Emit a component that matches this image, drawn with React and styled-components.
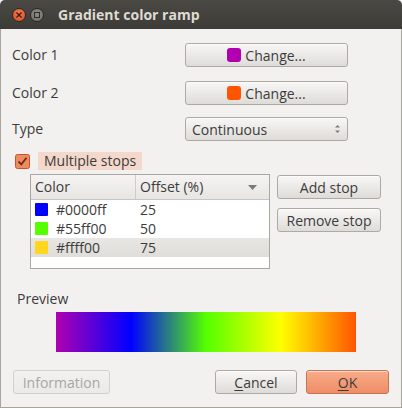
import React from 'react'
import styled, { createGlobalStyle } from 'styled-components'

const Global = createGlobalStyle`
  html, body { margin: 0; padding: 0; background: #f2f1f0; }
  body { font-family: "Open Sans", "Noto Sans", sans-serif; font-size: 14px; line-height: 18px; color: #3c3c3c; }
  * { box-sizing: border-box; }
`

const Window = styled.div`
  width: 402px;
  height: 408px;
  display: flex;
  flex-direction: column;
  background: #f2f1f0;
`

const TitleBar = styled.div`
  height: 29px;
  flex: none;
  display: flex;
  align-items: center;
  padding-left: 12px;
  background: linear-gradient(#4a4944, #3c3b37);
  border-radius: 5px 5px 0 0;
`

const WinButton = styled.div`
  width: 14px;
  height: 14px;
  border-radius: 50%;
  margin-right: 4px;
  display: flex;
  align-items: center;
  justify-content: center;
  background: ${p => (p.close ? 'radial-gradient(circle at 50% 35%, #f47a4f, #de4a1c)' : 'radial-gradient(circle at 50% 35%, #8c8b86, #6e6d68)')};
  border: 1px solid #2b2a27;
`

const Title = styled.div`
  margin-left: 10px;
  font-weight: 700;
  font-size: 14px;
  color: #dfdbd2;
`

const Body = styled.div`
  flex: 1;
  border: 1px solid #a8a59f;
  border-top: none;
  padding: 14px 12px 0 11px;
  display: flex;
  flex-direction: column;
`

const FormRow = styled.div`
  display: flex;
  align-items: center;
  height: 24px;
  margin-bottom: ${p => p.mb}px;
`

const Label = styled.div`
  width: 173px;
`

const Button = styled.button`
  font-family: inherit;
  font-size: 14px;
  color: ${p => (p.disabled ? '#a7a6a3' : '#3c3c3c')};
  height: 24px;
  width: ${p => p.w}px;
  padding: 0 6px;
  display: flex;
  align-items: center;
  justify-content: ${p => (p.left ? 'space-between' : 'center')};
  gap: 4px;
  border-radius: 3px;
  border: 1px solid ${p => (p.primary ? '#c67552' : p.disabled ? '#d3d0cb' : '#aeaaa3')};
  background: ${p =>
    p.primary
      ? 'linear-gradient(#f8ab8b, #ef8d65)'
      : p.disabled
      ? 'linear-gradient(#f2f1f0, #ebeae8)'
      : 'linear-gradient(#f8f7f6, #dedcd8)'};
  box-shadow: ${p => (p.disabled ? 'none' : 'inset 0 1px 0 rgba(255,255,255,0.6)')};
  cursor: default;
`

const Swatch = styled.span`
  display: inline-block;
  width: ${p => p.size || 14}px;
  height: ${p => p.size || 14}px;
  border-radius: ${p => (p.round ? 3 : 1)}px;
  background: ${p => p.color};
  flex: none;
`

const CheckRow = styled.div`
  display: flex;
  align-items: center;
  height: 18px;
  margin-left: 3px;
  gap: 8px;
`

const CheckLabel = styled.span`
  background: #f4d8cc;
  padding: 0 6px;
  height: 18px;
  line-height: 18px;
`

const StopsArea = styled.div`
  display: flex;
  margin-top: 4px;
  margin-left: 18px;
  gap: 7px;
`

const Table = styled.div`
  width: 240px;
  height: 95px;
  border: 1px solid #aaa7a1;
  background: #fff;
`

const Header = styled.div`
  display: grid;
  grid-template-columns: 104px 1fr;
  height: 25px;
  background: linear-gradient(#f5f4f3, #e7e5e2);
  border-bottom: 1px solid #c9c6c1;
`

const HeadCell = styled.div`
  display: flex;
  align-items: center;
  justify-content: space-between;
  padding: 0 12px 0 4px;
  border-left: ${p => (p.first ? 'none' : '1px solid #cfccc7')};
`

const Row = styled.div`
  display: grid;
  grid-template-columns: 104px 1fr;
  height: 19px;
  align-items: center;
  background: ${p => (p.selected ? 'linear-gradient(#e9e7e4, #dfddd9)' : 'transparent')};
`

const Cell = styled.div`
  display: flex;
  align-items: center;
  gap: 8px;
  padding-left: ${p => (p.first ? 4 : 5)}px;
`

const SideButtons = styled.div`
  display: flex;
  flex-direction: column;
  gap: 9px;
  padding-top: 1px;
`

const PreviewLabel = styled.div`
  margin: 21px 0 0 5px;
  height: 18px;
`

const GradientBar = styled.div`
  margin: 4px 0 0 44px;
  width: 300px;
  height: 40px;
  background: linear-gradient(to right, #b000b0 0%, #0000ff 25%, #55ff00 50%, #ffff00 75%, #ff5500 100%);
`

const Footer = styled.div`
  display: flex;
  align-items: center;
  margin-top: 18px;
  padding-left: 1px;
  gap: 9px;
`

const Spacer = styled.div`
  flex: 1;
`

const Mnemonic = styled.span`
  text-decoration: underline;
  text-underline-offset: 2px;
`

const Spin = () => (
  <svg width="7" height="12" viewBox="0 0 7 12">
    <path d="M1 4.5 L3.5 2 L6 4.5 Z" fill="#7d7b76" />
    <path d="M1 7.5 L3.5 10 L6 7.5 Z" fill="#7d7b76" />
  </svg>
)

const stops = [
  { color: '#0000ff', offset: 25 },
  { color: '#55ff00', offset: 50 },
  { color: '#ffd51e', hex: '#ffff00', offset: 75, selected: true },
]

export default function App() {
  return (
    <Window>
      <Global />
      <TitleBar>
        <WinButton close>
          <svg width="6" height="6" viewBox="0 0 6 6">
            <path d="M0.5 0.5 L5.5 5.5 M5.5 0.5 L0.5 5.5" stroke="#3a1a0e" strokeWidth="1.3" />
          </svg>
        </WinButton>
        <WinButton>
          <svg width="6" height="6" viewBox="0 0 6 6">
            <rect x="0.5" y="0.5" width="5" height="5" fill="none" stroke="#2e2d2a" strokeWidth="1" />
          </svg>
        </WinButton>
        <Title>Gradient color ramp</Title>
      </TitleBar>
      <Body>
        <FormRow mb={14}>
          <Label>Color 1</Label>
          <Button w={163}>
            <Swatch color="#b000b0" round />
            Change...
          </Button>
        </FormRow>
        <FormRow mb={12}>
          <Label>Color 2</Label>
          <Button w={163}>
            <Swatch color="#ff5500" round />
            Change...
          </Button>
        </FormRow>
        <FormRow mb={11}>
          <Label>Type</Label>
          <Button w={163} left>
            Continuous
            <Spin />
          </Button>
        </FormRow>
        <CheckRow>
          <svg width="15" height="15" viewBox="0 0 15 15">
            <rect x="0.5" y="0.5" width="14" height="14" rx="2" fill="#f08a60" stroke="#c1552d" />
            <path d="M3.5 7.5 L6.3 10.3 L11.5 3.8" fill="none" stroke="#6b2f18" strokeWidth="1.8" />
          </svg>
          <CheckLabel>Multiple stops</CheckLabel>
        </CheckRow>
        <StopsArea>
          <Table>
            <Header>
              <HeadCell first>Color</HeadCell>
              <HeadCell>
                Offset (%)
                <svg width="9" height="5" viewBox="0 0 9 5">
                  <path d="M0 0 L9 0 L4.5 5 Z" fill="#7d7b76" />
                </svg>
              </HeadCell>
            </Header>
            {stops.map(s => (
              <Row key={s.offset} selected={s.selected}>
                <Cell first>
                  <Swatch color={s.color} size={13} />
                  {s.hex || s.color}
                </Cell>
                <Cell>{s.offset}</Cell>
              </Row>
            ))}
          </Table>
          <SideButtons>
            <Button w={104}>Add stop</Button>
            <Button w={104}>Remove stop</Button>
          </SideButtons>
        </StopsArea>
        <PreviewLabel>Preview</PreviewLabel>
        <GradientBar />
        <Footer>
          <Button w={97} disabled>Information</Button>
          <Spacer />
          <Button w={82}>
            <span><Mnemonic>C</Mnemonic>ancel</span>
          </Button>
          <Button w={83} primary>
            <span><Mnemonic>O</Mnemonic>K</span>
          </Button>
        </Footer>
      </Body>
    </Window>
  )
}
